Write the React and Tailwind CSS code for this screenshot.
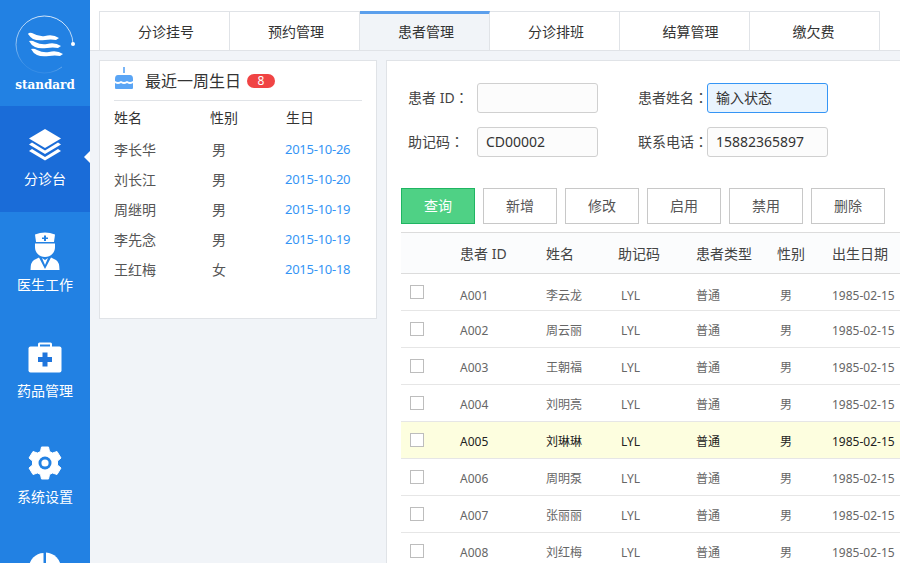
import React from 'react';

const FONT = "font-['Noto_Sans','Noto_Sans_CJK_SC',sans-serif]";

const LayersIcon = () => (
    <svg width="34" height="32" viewBox="0 0 34 32" fill="white">
        <path d="M17 0 L33 9.5 L17 19 L1 9.5 Z" />
        <path d="M4 13.5 L1 15.5 L17 25 L33 15.5 L30 13.5 L17 21.5 Z" />
        <path d="M4 20 L1 22 L17 31.5 L33 22 L30 20 L17 28 Z" />
    </svg>
);

const DoctorIcon = () => (
    <svg width="30" height="38" viewBox="0 0 30 38" fill="white">
        <path d="M5 2.5 Q15 -1.5 25 2.5 L24 10 L6 10 Z" />
        <path d="M14 3.5 h2 v2 h2 v1.6 h-2 v2 h-2 v-2 h-2 v-1.6 h2 Z" fill="#2281e3" />
        <path d="M5 11.5 H25 V15 C25 21 20.5 25 15 25 C9.5 25 5 21 5 15 Z" />
        <path d="M9 25.5 L15 37 L21 25.5 L26 28 Q29.5 30 29.5 38 H0.5 Q0.5 30 4 28 Z" />
        <path d="M12 26 L15 28 L18 26 L15 33 Z" />
    </svg>
);

const KitIcon = () => (
    <svg width="34" height="31" viewBox="0 0 34 31" fill="white">
        <path d="M10 5 V2 Q10 0.5 11.5 0.5 H22.5 Q24 0.5 24 2 V5 H22 V2.5 H12 V5 Z" />
        <rect x="0.5" y="4.5" width="33" height="26" rx="2" />
        <path d="M14.5 10.5 H19.5 V15 H24 V20 H19.5 V24.5 H14.5 V20 H10 V15 H14.5 Z" fill="#1f75dc" />
    </svg>
);

const GearIcon = () => (
    <svg width="34" height="34" viewBox="0 0 34 34" fill="white">
        <path
            fillRule="evenodd"
            d="M13.5 1 H20.5 L21.5 5.5 L24.5 7 L29 5.5 L33 12 L29.5 15 V19 L33 22 L29 28.5 L24.5 27 L21.5 28.5 L20.5 33 H13.5 L12.5 28.5 L9.5 27 L5 28.5 L1 22 L4.5 19 V15 L1 12 L5 5.5 L9.5 7 L12.5 5.5 Z"
            strokeLinejoin="round"
            stroke="white"
        />
        <circle cx="17" cy="17" r="6.5" fill="#2281e3" />
        <circle cx="17" cy="17" r="3.6" fill="white" />
    </svg>
);

const PieIcon = () => (
    <svg width="34" height="34" viewBox="0 0 34 34" fill="white">
        <path d="M15.5 1 V16 H1 A15 15 0 0 1 15.5 1 Z" />
        <path d="M18 0.5 A16 16 0 0 1 33 16 H18 Z" />
        <path d="M1.5 18.5 H15.5 V33 A15 15 0 0 1 1.5 18.5 Z" />
        <path d="M18 18.5 H33 A16 16 0 0 1 18 33 Z" />
    </svg>
);

const Logo = () => (
    <svg width="62" height="60" viewBox="0 0 62 60" fill="none">
        <defs>
            <linearGradient id="ring" x1="0.9" y1="0" x2="0.6" y2="1">
                <stop offset="0" stopColor="white" stopOpacity="0.95" />
                <stop offset="0.7" stopColor="white" stopOpacity="0.55" />
                <stop offset="1" stopColor="white" stopOpacity="0.1" />
            </linearGradient>
        </defs>
        <path d="M59 29 A28.5 28.5 0 1 0 48 52" stroke="url(#ring)" strokeWidth="0.9" />
        <circle cx="59" cy="29" r="2" fill="white" />
        <path d="M14 19 Q15 17 18 18 Q25 22 31 21 Q39 19 45 23 L42 25 Q37 24 31 25 Q23 26 19 24 Q16 22 14 19 Z" fill="white" />
        <path d="M15 26 Q18 25 21 27 Q27 30 33 29 Q41 27 47 31 L44 33 Q39 32 33 33 Q25 34 21 32 Q17 30 15 26 Z" fill="white" />
        <path d="M17 34 Q20 33 23 35 Q29 38 35 37 Q43 35 49 39 L46 41 Q41 40 35 41 Q27 42 23 40 Q19 38 17 34 Z" fill="white" />
    </svg>
);

const NAV = [
    { label: '分诊台', icon: <LayersIcon />, active: true },
    { label: '医生工作', icon: <DoctorIcon /> },
    { label: '药品管理', icon: <KitIcon /> },
    { label: '系统设置', icon: <GearIcon /> },
    { icon: <PieIcon /> },
];

const TABS = [
    { label: '分诊挂号', pad: 'pl-[3px]' },
    { label: '预约管理', pad: 'pl-[3px]' },
    { label: '患者管理', pad: 'pl-[3px]', active: true },
    { label: '分诊排班', pad: 'pl-[3px]' },
    { label: '结算管理', pad: 'pl-[12px]' },
    { label: '缴欠费', pad: 'pr-[2px]' },
];

const BIRTHDAYS = [
    ['李长华', '男', '2015-10-26'],
    ['刘长江', '男', '2015-10-20'],
    ['周继明', '男', '2015-10-19'],
    ['李先念', '男', '2015-10-19'],
    ['王红梅', '女', '2015-10-18'],
];

const BUTTONS = ['新增', '修改', '启用', '禁用', '删除'];

const PATIENTS = [
    ['A001', '李云龙'],
    ['A002', '周云丽'],
    ['A003', '王朝福'],
    ['A004', '刘明亮'],
    ['A005', '刘琳琳'],
    ['A006', '周明泵'],
    ['A007', '张丽丽'],
    ['A008', '刘红梅'],
];

const Sidebar = () => (
    <aside className="w-[90px] h-full shrink-0 bg-[#2281e3] overflow-hidden">
        <div className="h-[106px] flex flex-col items-center pt-[15px]">
            <Logo />
            <span className="mt-[3px] text-[12px] leading-[14px] font-bold text-white font-['DejaVu_Serif',serif]">standard</span>
        </div>
        {NAV.map((item, i) => (
            <div
                key={i}
                className={`relative h-[106px] flex flex-col items-center text-white ${item.active ? 'bg-[#1a6cd8]' : ''}`}
            >
                <div className="h-[40px] mt-[19px] flex items-center justify-center">{item.icon}</div>
                {item.label && <span className="mt-[4px] text-[14px] leading-[20px]">{item.label}</span>}
                {item.active && (
                    <span className="absolute right-0 top-[45px] border-y-[6px] border-y-transparent border-r-[6px] border-r-white" />
                )}
            </div>
        ))}
    </aside>
);

const Tabs = () => (
    <div className="h-[51px] shrink-0 bg-white border-b border-[#e0e3e7] pt-[11px] pl-[9px] flex">
        {TABS.map((tab) => (
            <div
                key={tab.label}
                className={`w-[130px] first:w-[131px] h-[39px] border-r border-[#e0e3e7] first:border-l flex items-center justify-center text-[14px] text-[#333] ${tab.pad} ${tab.active ? 'bg-[#f1f4f8] border-t-[3px] border-t-[#5b9fec] pb-[2px]' : 'border-t'}`}
            >
                {tab.label}
            </div>
        ))}
    </div>
);

const BirthdayCard = () => (
    <section className="w-[278px] h-[259px] shrink-0 bg-white border border-[#e0e3e7] px-[14px]">
        <div className="h-[40px] flex items-center border-b border-[#e0e3e7]">
            <svg width="20" height="23" viewBox="0 0 20 23" className="mb-[5px]">
                <rect x="9.2" y="0" width="1.6" height="6" fill="#5aa5f5" />
                <path d="M1 12 Q1 8 4 8 H16 Q19 8 19 12 V14 Q16 16 13 14 Q10 16 7 14 Q4 16 1 14 Z" fill="#5aa5f5" />
                <path d="M1 16 Q4 18 7 16 Q10 18 13 16 Q16 18 19 16 V21 Q19 22 18 22 H2 Q1 22 1 21 Z" fill="#5aa5f5" />
            </svg>
            <span className="ml-[11px] text-[16px] text-[#333]">最近一周生日</span>
            <span className="ml-[6px] w-[28px] h-[14px] rounded-full bg-[#f04444] text-white text-[12px] leading-[14px] text-center">8</span>
        </div>
        <div className="grid grid-cols-[96px_76px_1fr] h-[33px] items-center text-[14px] text-[#333]">
            <span>姓名</span>
            <span>性别</span>
            <span>生日</span>
        </div>
        {BIRTHDAYS.map(([name, sex, date]) => (
            <div key={name} className="grid grid-cols-[98px_73px_1fr] h-[30px] items-center text-[14px] text-[#555]">
                <span>{name}</span>
                <span>{sex}</span>
                <span className="pt-[2px] text-[13px] tracking-[-0.02em] text-[#3595f5]">{date}</span>
            </div>
        ))}
    </section>
);

const Field = ({ label, value, focus }) => (
    <div className="flex items-center">
        <span className="w-[69px] text-[14px] leading-[20px] text-[#444] whitespace-nowrap pb-[1px]">
            {label}
            <span className="font-['Noto_Sans_CJK_TC',sans-serif]">：</span>
        </span>
        <div
            className={`w-[121px] h-[30px] rounded-[3px] border flex items-center pl-[8px] pb-[2px] text-[14px] text-[#333] ${focus ? 'border-[#3595f5] bg-[#e9f4fe]' : 'border-[#d0d0d0] bg-[#fcfcfc]'}`}
        >
            {value}
        </div>
    </div>
);

const ROW_GRID = 'grid grid-cols-[59px_86px_72px_78px_81px_55px_1fr] items-center';

const PatientTable = () => (
    <div className="mt-[8px] ml-[14px] border-t border-[#dcdcdc]">
        <div className={`${ROW_GRID} h-[41px] bg-[#fbfcfd] border-b border-[#dcdcdc] text-[14px] text-[#444]`}>
            <span />
            <span>患者 ID</span>
            <span>姓名</span>
            <span>助记码</span>
            <span>患者类型</span>
            <span>性别</span>
            <span className="whitespace-nowrap">出生日期</span>
        </div>
        {PATIENTS.map(([id, name], i) => {
            const active = i === 4;
            const cell = i === 0 ? 'pt-[8px]' : 'pt-[4px]';
            return (
                <div
                    key={id}
                    className={`${ROW_GRID} h-[37px] border-b border-[#e6e6e6] text-[12px] ${active ? 'bg-[#fdfedf] text-[#222]' : 'text-[#666]'}`}
                >
                    <span className="ml-[9px] w-[14px] h-[14px] border border-[#bdbdbd] bg-white" />
                    <span className={cell}>{id}</span>
                    <span className={cell}>{name}</span>
                    <span className={`${cell} pl-[3px]`}>LYL</span>
                    <span className={cell}>普通</span>
                    <span className={`${cell} pl-[3px]`}>男</span>
                    <span className={`${cell} whitespace-nowrap`}>1985-02-15</span>
                </div>
            );
        })}
    </div>
);

const PatientPanel = () => (
    <section className="flex-1 min-w-0 bg-white border-l border-t border-[#e0e3e7] overflow-hidden">
        <div className="pl-[21px] pt-[22px] flex flex-col gap-[14px]">
            <div className="flex gap-[40px]">
                <Field label="患者 ID" />
                <Field label="患者姓名" value="输入状态" focus />
            </div>
            <div className="flex gap-[40px]">
                <Field label="助记码" value="CD00002" />
                <Field label="联系电话" value="15882365897" />
            </div>
        </div>
        <div className="ml-[14px] mt-[31px] flex gap-[8px]">
            <button className="w-[74px] h-[36px] pb-[2px] bg-[#4fd185] border border-[#1fb562] text-white text-[14px]">查询</button>
            {BUTTONS.map((b) => (
                <button key={b} className="w-[74px] h-[36px] pb-[2px] bg-white border border-[#c8c8c8] text-[#555] text-[14px]">
                    {b}
                </button>
            ))}
        </div>
        <PatientTable />
    </section>
);

const App = () => (
    <div className={`w-[900px] h-[563px] flex overflow-hidden bg-[#f1f4f8] ${FONT}`}>
        <Sidebar />
        <main className="flex-1 min-w-0 flex flex-col">
            <Tabs />
            <div className="flex-1 min-h-0 flex gap-[9px] pl-[9px] pt-[9px]">
                <BirthdayCard />
                <PatientPanel />
            </div>
        </main>
    </div>
);

export default App;
